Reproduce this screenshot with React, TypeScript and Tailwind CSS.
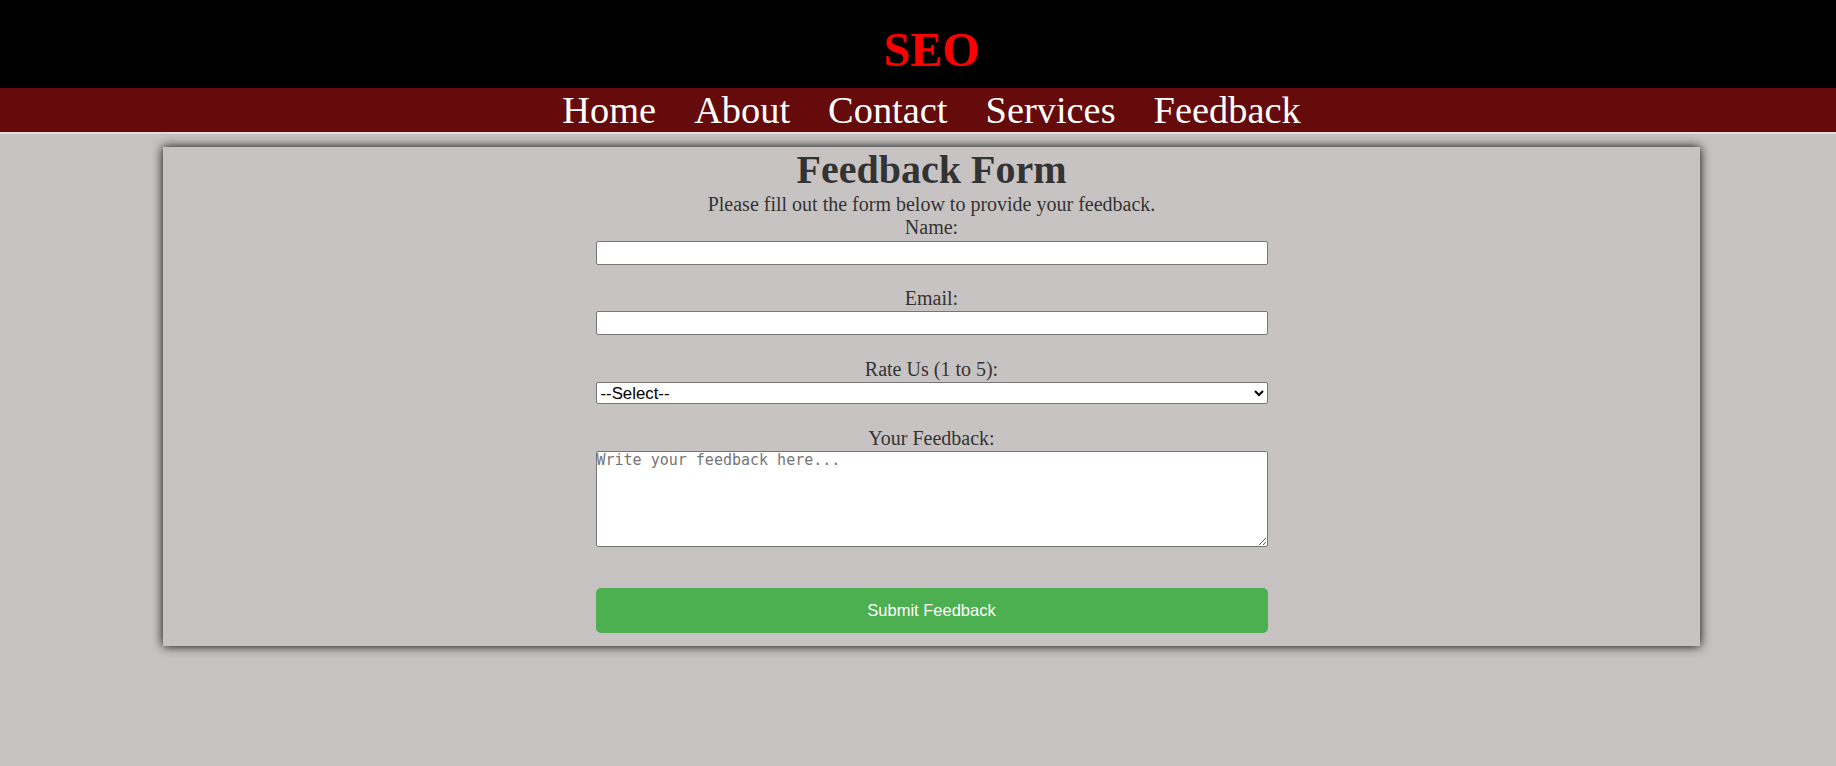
import { useState } from "react";

const serif = "font-['Liberation_Serif','Times_New_Roman',serif]";

const links = ["Home", "About", "Contact", "Services", "Feedback"];

function Field({ label, children }: { label: string; children: React.ReactNode }) {
  return (
    <div className="flex flex-col items-center">
      <label className="block h-[23px] text-[20px] leading-[23px]">{label}</label>
      {children}
    </div>
  );
}

export default function App() {
  const [rating, setRating] = useState("");

  return (
    <div className={`min-h-screen w-full overflow-hidden bg-[#c8c3c3] ${serif}`}>
      <div className="w-[1863px]">
        <header className="flex h-[88px] justify-center bg-black pt-[22px]">
          <h1 className="text-[48px] font-bold leading-[55px] text-[#ff0000]">SEO</h1>
        </header>

        <nav className="flex h-[46px] justify-center gap-[38px] border-b-2 border-[#e2dcdc] bg-[#650b0b]">
          {links.map((l) => (
            <a key={l} href="#" className="text-[38.4px] leading-[44px] text-white">
              {l}
            </a>
          ))}
        </nav>

        <main className="mx-auto mt-[13px] flex w-[1537px] flex-col items-center bg-[#c8c3c3] pb-[13px] text-[#333] shadow-[0_0_10px_#000]">
          <h2 className="text-[40px] font-bold leading-[46px]">Feedback Form</h2>
          <p className="text-[20px] leading-[23px]">Please fill out the form below to provide your feedback.</p>

          <form className="flex w-[672px] flex-col" onSubmit={(e) => e.preventDefault()}>
            <Field label="Name:">
              <input
                type="text"
                className="mt-[2px] mb-[22px] h-[24px] w-full rounded-[2px] border border-[#767676] bg-white px-[2px]"
              />
            </Field>
            <Field label="Email:">
              <input
                type="email"
                className="mt-[1px] mb-[23px] h-[24px] w-full rounded-[2px] border border-[#767676] bg-white px-[2px]"
              />
            </Field>
            <Field label="Rate Us (1 to 5):">
              <select
                value={rating}
                onChange={(e) => setRating(e.target.value)}
                className="mt-[1px] mb-[23px] h-[22px] w-full rounded-[2px] border border-[#767676] bg-white font-['Liberation_Sans',Arial,sans-serif] text-[16.8px] leading-[19px] text-black"
              >
                <option value="">--Select--</option>
                <option value="1">1</option>
                <option value="2">2</option>
                <option value="3">3</option>
                <option value="4">4</option>
                <option value="5">5</option>
              </select>
            </Field>
            <Field label="Your Feedback:">
              <textarea
                placeholder="Write your feedback here..."
                className="mt-[1px] h-[96px] w-full rounded-[2px] border border-[#767676] bg-white p-0 font-['DejaVu_Sans_Mono',monospace] text-[15px] leading-[17px] text-black placeholder:text-[#757575]"
              />
            </Field>
            <button
              type="submit"
              className="mt-[41px] h-[45px] w-full rounded-[5px] bg-[#4caf50] font-['Liberation_Sans',Arial,sans-serif] text-[16.5px] text-white"
            >
              Submit Feedback
            </button>
          </form>
        </main>
      </div>
    </div>
  );
}
